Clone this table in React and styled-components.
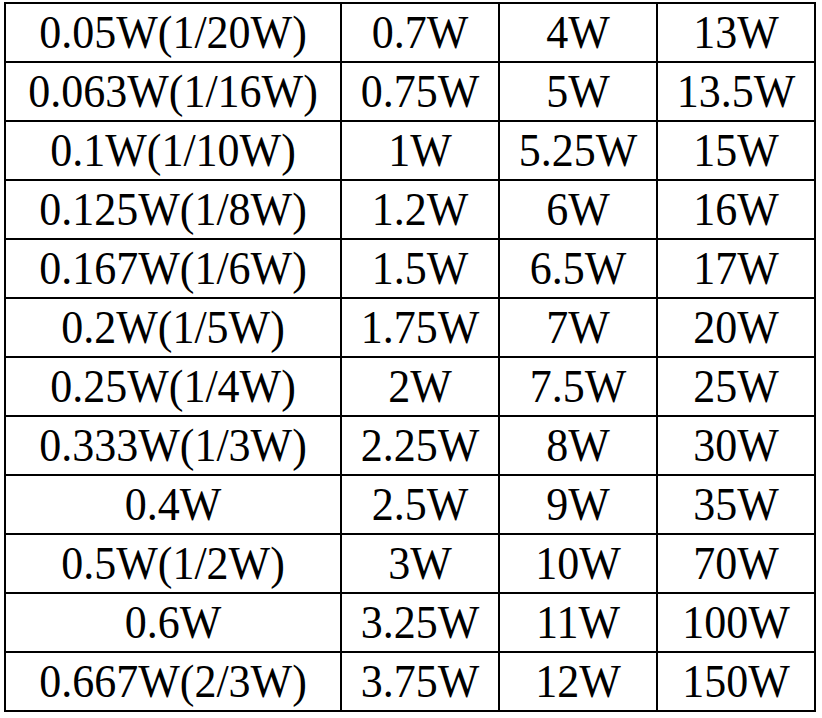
import React from "react";
import styled, { createGlobalStyle } from "styled-components";

const rows = [
  ["0.05W(1/20W)", "0.7W", "4W", "13W"],
  ["0.063W(1/16W)", "0.75W", "5W", "13.5W"],
  ["0.1W(1/10W)", "1W", "5.25W", "15W"],
  ["0.125W(1/8W)", "1.2W", "6W", "16W"],
  ["0.167W(1/6W)", "1.5W", "6.5W", "17W"],
  ["0.2W(1/5W)", "1.75W", "7W", "20W"],
  ["0.25W(1/4W)", "2W", "7.5W", "25W"],
  ["0.333W(1/3W)", "2.25W", "8W", "30W"],
  ["0.4W", "2.5W", "9W", "35W"],
  ["0.5W(1/2W)", "3W", "10W", "70W"],
  ["0.6W", "3.25W", "11W", "100W"],
  ["0.667W(2/3W)", "3.75W", "12W", "150W"],
];

const GlobalStyle = createGlobalStyle`
  html, body {
    margin: 0;
    background: #ffffff;
  }
`;

const Page = styled.div`
  padding: 2px 0 0 4px;
`;

const Grid = styled.div`
  display: grid;
  grid-template-columns: 336px 158px 158px 158px;
  grid-auto-rows: 59px;
  width: 812px;
  box-sizing: border-box;
  border-top: 2px solid #000;
  border-left: 2px solid #000;
`;

const Cell = styled.div`
  display: flex;
  align-items: center;
  justify-content: center;
  box-sizing: border-box;
  border-right: 2px solid #000;
  border-bottom: 2px solid #000;
  font-family: "Liberation Serif", "Times New Roman", serif;
  font-size: 44px;
  color: #000;
  white-space: nowrap;
`;

const Value = styled.span`
  display: inline-block;
  transform: scaleY(1.07);
`;

export default function App() {
  return (
    <>
      <GlobalStyle />
      <Page>
        <Grid>
          {rows.map((row, i) =>
            row.map((val, j) => (
              <Cell key={`${i}-${j}`}>
                <Value>{val}</Value>
              </Cell>
            ))
          )}
        </Grid>
      </Page>
    </>
  );
}
